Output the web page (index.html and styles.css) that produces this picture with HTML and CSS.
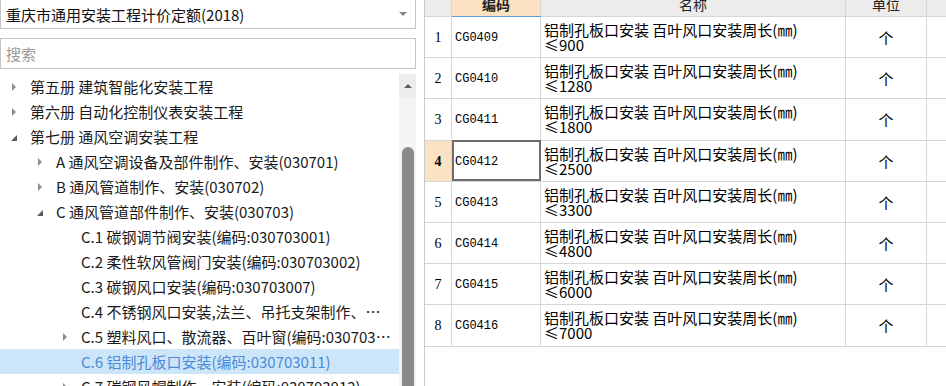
FILE: index.html
```html
<!DOCTYPE html>
<html lang="zh-CN">

<head>
    <meta charset="UTF-8">
    <meta name="viewport" content="width=device-width, initial-scale=1.0">
    <link rel="stylesheet" href="styles.css">
</head>

<body>
    <div class="layout">
        <!-- левая панель: выбор норматива и дерево -->
        <div class="side">
            <div class="combo">
                <span>重庆市通用安装工程计价定额(2018)</span>
                <i class="combo__arrow"></i>
            </div>
            <div class="search">搜索</div>

            <div class="tree-wrap">
                <div class="tree">
                    <div class="node lv0"><i class="tw closed"></i><span>第五册 建筑智能化安装工程</span></div>
                    <div class="node lv0"><i class="tw closed"></i><span>第六册 自动化控制仪表安装工程</span></div>
                    <div class="node lv0"><i class="tw open"></i><span>第七册 通风空调安装工程</span></div>
                    <div class="node lv1"><i class="tw closed"></i><span>A 通风空调设备及部件制作、安装(030701)</span></div>
                    <div class="node lv1"><i class="tw closed"></i><span>B 通风管道制作、安装(030702)</span></div>
                    <div class="node lv1"><i class="tw open"></i><span>C 通风管道部件制作、安装(030703)</span></div>
                    <div class="node lv2"><i class="tw"></i><span>C.1 碳钢调节阀安装(编码:030703001)</span></div>
                    <div class="node lv2"><i class="tw"></i><span>C.2 柔性软风管阀门安装(编码:030703002)</span></div>
                    <div class="node lv2"><i class="tw"></i><span>C.3 碳钢风口安装(编码:030703007)</span></div>
                    <div class="node lv2"><i class="tw"></i><span>C.4 不锈钢风口安装,法兰、吊托支架制作、安装(编码:030703009)</span></div>
                    <div class="node lv2"><i class="tw closed"></i><span>C.5 塑料风口、散流器、百叶窗(编码:030703010)</span></div>
                    <div class="node lv2 selected"><i class="tw"></i><span>C.6 铝制孔板口安装(编码:030703011)</span></div>
                    <div class="node lv2"><i class="tw closed"></i><span>C.7 碳钢风帽制作、安装(编码:030703012)</span></div>
                </div>
                <div class="vscroll">
                    <div class="vscroll__btn"><i></i></div>
                    <div class="vscroll__thumb"></div>
                </div>
            </div>
        </div>

        <!-- правая панель: таблица расценок -->
        <div class="grid">
            <table class="quota">
                <thead>
                    <tr>
                        <th class="c-no"></th>
                        <th class="c-code active">编码</th>
                        <th class="c-name">名称</th>
                        <th class="c-unit">单位</th>
                        <th class="c-rest"></th>
                    </tr>
                </thead>
                <tbody>
                    <tr><td class="c-no">1</td><td class="c-code">CG0409</td><td class="c-name"><div class="nm">铝制孔板口安装 百叶风口安装周长(㎜)<br>≤900</div></td><td class="c-unit">个</td><td></td></tr>
                    <tr><td class="c-no">2</td><td class="c-code">CG0410</td><td class="c-name"><div class="nm">铝制孔板口安装 百叶风口安装周长(㎜)<br>≤1280</div></td><td class="c-unit">个</td><td></td></tr>
                    <tr><td class="c-no">3</td><td class="c-code">CG0411</td><td class="c-name"><div class="nm">铝制孔板口安装 百叶风口安装周长(㎜)<br>≤1800</div></td><td class="c-unit">个</td><td></td></tr>
                    <tr class="current"><td class="c-no">4</td><td class="c-code focus">CG0412</td><td class="c-name"><div class="nm">铝制孔板口安装 百叶风口安装周长(㎜)<br>≤2500</div></td><td class="c-unit">个</td><td></td></tr>
                    <tr><td class="c-no">5</td><td class="c-code">CG0413</td><td class="c-name"><div class="nm">铝制孔板口安装 百叶风口安装周长(㎜)<br>≤3300</div></td><td class="c-unit">个</td><td></td></tr>
                    <tr><td class="c-no">6</td><td class="c-code">CG0414</td><td class="c-name"><div class="nm">铝制孔板口安装 百叶风口安装周长(㎜)<br>≤4800</div></td><td class="c-unit">个</td><td></td></tr>
                    <tr><td class="c-no">7</td><td class="c-code">CG0415</td><td class="c-name"><div class="nm">铝制孔板口安装 百叶风口安装周长(㎜)<br>≤6000</div></td><td class="c-unit">个</td><td></td></tr>
                    <tr><td class="c-no">8</td><td class="c-code">CG0416</td><td class="c-name"><div class="nm">铝制孔板口安装 百叶风口安装周长(㎜)<br>≤7000</div></td><td class="c-unit">个</td><td></td></tr>
                </tbody>
            </table>
        </div>
    </div>
</body>

</html>
```

FILE: styles.css
```css
html,
body {
    margin: 0;
    height: 100%;
    overflow: hidden;
    background: #fff;
}

body {
    font-family: "Noto Sans CJK SC", "Noto Sans", sans-serif;
    font-size: 15px;
    color: #1a1a1a;
}

.layout {
    display: flex;
    height: 386px;
}

/* левая панель */
.side {
    width: 416px;
    flex: none;
    display: flex;
    flex-direction: column;
}

.combo {
    height: 28px;
    border: 1px solid #c6c6c6;
    border-top: none;
    display: flex;
    align-items: center;
    justify-content: space-between;
    padding: 0 8px 0 5px;
    line-height: 1;
    color: #111;
}

.combo__arrow {
    width: 0;
    height: 0;
    border-left: 4px solid transparent;
    border-right: 4px solid transparent;
    border-top: 4px solid #888;
}

.search {
    margin-top: 9px;
    height: 31px;
    border: 1px solid #c6c6c6;
    box-sizing: border-box;
    display: flex;
    align-items: center;
    padding-left: 5px;
    color: #9a9a9a;
}

.tree-wrap {
    margin-top: 5px;
    flex: 1;
    display: flex;
    overflow: hidden;
}

.tree {
    flex: 1;
    min-width: 0;
}

.node {
    height: 25px;
    display: flex;
    align-items: center;
    white-space: nowrap;
    padding-right: 4px;
}

.node span {
    overflow: hidden;
    text-overflow: ellipsis;
}

.node.lv0 { padding-left: 8px; }
.node.lv1 { padding-left: 34px; }
.node.lv2 { padding-left: 59px; }

.tw {
    width: 22px;
    flex: none;
    display: flex;
    align-items: center;
}

.tw.closed::before {
    content: "";
    margin-left: 4px;
    border-top: 4px solid transparent;
    border-bottom: 4px solid transparent;
    border-left: 4px solid #8e8e8e;
}

.tw.open::before {
    content: "";
    margin-left: 3px;
    margin-top: 3px;
    border-top: 6px solid transparent;
    border-right: 6px solid #5a5a5a;
}

.node.selected {
    background: #cde5f9;
    color: #4a8ad8;
}

.vscroll {
    width: 17px;
    flex: none;
    display: flex;
    flex-direction: column;
    align-items: center;
    background: #f4f4f4;
}

.vscroll__btn {
    height: 24px;
    width: 17px;
    display: flex;
    justify-content: center;
    align-items: center;
    background: #ececec;
}

.vscroll__btn i {
    border-left: 4px solid transparent;
    border-right: 4px solid transparent;
    border-bottom: 4px solid #606060;
}

.vscroll__thumb {
    margin-top: 49px;
    width: 12px;
    flex: 1;
    border-radius: 6px 6px 0 0;
    background: #8a8a8a;
}

/* правая панель */
.grid {
    flex: 1;
    margin-left: 8px;
    border-left: 1px solid #c9c9c9;
    overflow: hidden;
}

.quota {
    border-collapse: collapse;
    table-layout: fixed;
    width: 540px;
    margin-top: -8px;
}

.quota th,
.quota td {
    border: 1px solid #d6d6d6;
    padding: 0;
}

.quota th {
    height: 24px;
    background: #ececec;
    font-weight: normal;
    font-size: 14px;
    color: #222;
}

.quota th.active {
    background: #fbe2c2;
    font-weight: bold;
    border-bottom: 1px solid #5b9bd5;
}

.quota tbody tr {
    height: 41.2px;
}

.quota td {
    color: #000;
    line-height: 16px;
}

.quota tr:first-child th {
    border-top: none;
}

.quota tr > :first-child {
    border-left: none;
}

.c-no {
    width: 26px;
    text-align: center;
    font-family: "Liberation Serif", serif;
    font-size: 14px;
}

td.c-no {
    padding-top: 2px;
}

.c-code {
    width: 88px;
}

td.c-code {
    padding-left: 3px;
    padding-top: 2px;
    font-family: "Liberation Mono", monospace;
    font-size: 12px;
}

.c-name {
    width: 304px;
}

td.c-name {
    padding-left: 3px;
    font-size: 15px;
}

.nm {
    height: 30px;
    line-height: 15px;
    white-space: nowrap;
}

.c-unit {
    width: 80px;
    text-align: center;
}

td.c-unit {
    font-size: 15px;
    padding-top: 2px;
}

.current .c-no {
    background: #fbe2c2;
    font-weight: bold;
}

td.focus {
    outline: 2px solid #6e6e6e;
    outline-offset: -2px;
    box-shadow: inset 2px 0 0 #5b9bd5;
}
```
